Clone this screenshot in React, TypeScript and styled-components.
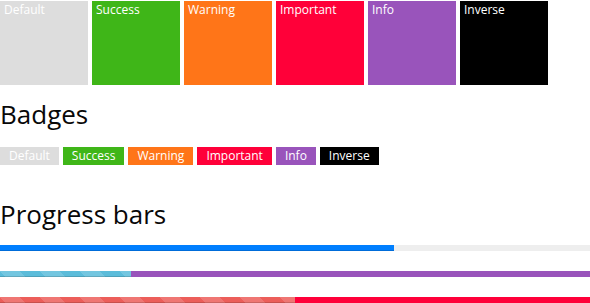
import styled, { createGlobalStyle, css } from "styled-components";

const GlobalStyle = createGlobalStyle`
  html, body {
    margin: 0;
    padding: 0;
    background: #ffffff;
  }
  body {
    font-family: "Open Sans", "Liberation Sans", sans-serif;
    color: #080808;
    overflow: hidden;
  }
`;

const palette: Record<string, string> = {
  Default: "#dddddd",
  Success: "#3fb618",
  Warning: "#ff7518",
  Important: "#ff0039",
  Info: "#9954bb",
  Inverse: "#000000",
};

const kinds = Object.keys(palette);

const bars = [
  { track: "#eeeeee", fill: "#007fff", value: 66.8, striped: false },
  { track: "#9954bb", fill: "#5bbcda", value: 22.2, striped: true },
  { track: "#ff0039", fill: "#ec5e5a", value: 50, striped: true },
];

function App() {
  return (
    <>
      <GlobalStyle />
      <Page>
        <TileRow>
          {kinds.map((k) => (
            <Tile key={k} $bg={palette[k]}>
              {k}
            </Tile>
          ))}
        </TileRow>

        <SectionTitle $top={14}>Badges</SectionTitle>
        <BadgeRow>
          {kinds.map((k) => (
            <Badge key={k} $bg={palette[k]}>
              {k}
            </Badge>
          ))}
        </BadgeRow>

        <SectionTitle $top={34}>Progress bars</SectionTitle>
        <BarList>
          {bars.map((b, i) => (
            <Track key={i} $bg={b.track}>
              <Fill
                $bg={b.fill}
                $striped={b.striped}
                style={{ width: `${b.value}%` }}
              />
            </Track>
          ))}
        </BarList>
      </Page>
    </>
  );
}

export default App;

const Page = styled.div`
  display: flex;
  flex-direction: column;
  width: 590px;
  padding-top: 1px;
`;

const TileRow = styled.div`
  display: flex;
  gap: 4px;
`;

const Tile = styled.div<{ $bg: string }>`
  width: 88px;
  height: 84px;
  box-sizing: border-box;
  padding: 0 4px;
  background: ${(p) => p.$bg};
  color: #ffffff;
  font-size: 12px;
  line-height: 18px;
`;

const SectionTitle = styled.h2<{ $top: number }>`
  margin: ${(p) => p.$top}px 0 0;
  font-size: 26px;
  font-weight: 400;
  line-height: 30px;
  color: #080808;
`;

const BadgeRow = styled.div`
  display: flex;
  gap: 4px;
  margin-top: 18px;
`;

const Badge = styled.span<{ $bg: string }>`
  display: inline-block;
  padding: 0 9px;
  height: 18px;
  line-height: 18px;
  font-size: 12px;
  color: #ffffff;
  background: ${(p) => p.$bg};
  white-space: nowrap;
`;

const BarList = styled.div`
  display: flex;
  flex-direction: column;
  gap: 20px;
  margin-top: 16px;
`;

const Track = styled.div<{ $bg: string }>`
  display: flex;
  height: 6px;
  width: 100%;
  background: ${(p) => p.$bg};
`;

const Fill = styled.div<{ $bg: string; $striped: boolean }>`
  height: 100%;
  background-color: ${(p) => p.$bg};
  box-shadow: inset 0 -1px 0 rgba(0, 0, 0, 0.15);
  ${(p) =>
    p.$striped &&
    css`
      background-image: linear-gradient(
        45deg,
        rgba(255, 255, 255, 0.15) 25%,
        transparent 25%,
        transparent 50%,
        rgba(255, 255, 255, 0.15) 50%,
        rgba(255, 255, 255, 0.15) 75%,
        transparent 75%,
        transparent
      );
      background-size: 40px 40px;
    `}
`;
